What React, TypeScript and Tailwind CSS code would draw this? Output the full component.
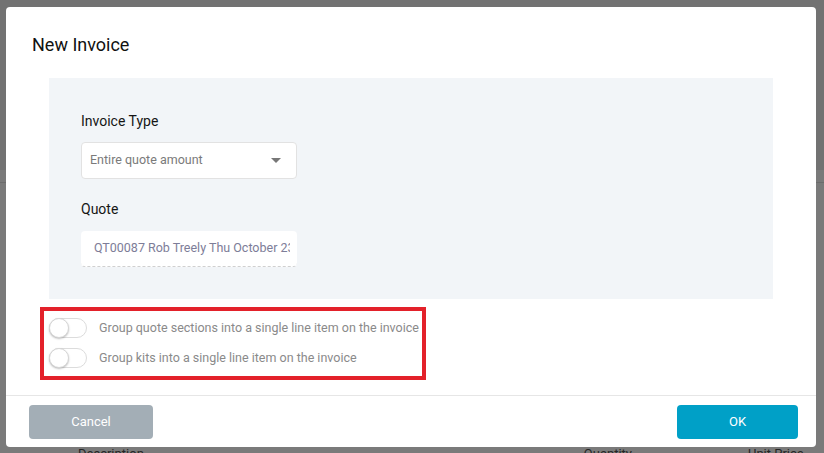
import React from 'react'

const OPTIONS = [
  'Group quote sections into a single line item on the invoice',
  'Group kits into a single line item on the invoice',
]

function Toggle() {
  return (
    <div className="relative h-[20px] w-[38px] shrink-0 rounded-full border border-[#dcdcdc] bg-white">
      <div className="absolute left-[-1px] top-[-1px] h-[20px] w-[20px] rounded-full border border-[#d6d6d6] bg-white shadow-[0_1px_2px_rgba(0,0,0,0.25)]" />
    </div>
  )
}

export default function App() {
  return (
    <div className="relative h-[453px] w-[824px] overflow-hidden bg-[#7a7a7a] font-['Roboto',sans-serif]">
      {/* page behind the overlay */}
      <div className="flex h-full flex-col">
        <div className="h-[170px] bg-[#727272]" />
        <div className="h-[12px]" />
        <div className="h-px bg-[#6c6c6c]" />
        <div className="flex-1" />
        <div className="flex h-[6px] items-start text-[13px] leading-[13px] text-[#262626]">
          <span className="ml-[78px]">Description</span>
          <span className="ml-[440px]">Quantity</span>
          <span className="ml-[116px]">Unit Price</span>
        </div>
      </div>

      {/* dialog */}
      <div className="absolute left-[6px] top-[7px] flex h-[440px] w-[810px] flex-col rounded-[4px] bg-white">
        <div className="h-[71px] pl-[26px] pt-[26px]">
          <h1 className="text-[18px] leading-[24px] text-[#111]">New Invoice</h1>
        </div>

        <div className="mx-[43px] flex h-[221px] flex-col bg-[#f2f5f8] px-[32px] pt-[33px]">
          <label className="text-[14px] leading-[20px] text-[#151515]">Invoice Type</label>
          <div className="mt-[11px] flex h-[37px] w-[216px] items-center justify-between rounded-[4px] border border-[#e2e2e2] bg-white pl-[8px] pr-[15px]">
            <span className="text-[12.5px] text-[#7a7a7a]">Entire quote amount</span>
            <svg width="10" height="5" viewBox="0 0 10 5">
              <path d="M0 0 L10 0 L5 5 Z" fill="#777" />
            </svg>
          </div>

          <label className="mt-[20px] text-[14px] leading-[20px] text-[#151515]">Quote</label>
          <div className="mt-[12px] flex h-[36px] w-[216px] items-center rounded-[4px] border-b border-dashed border-[#d0d0d0] bg-white pl-[13px] pr-[7px]">
            <span className="overflow-hidden whitespace-nowrap text-[12.5px] text-[#7d7d98]">
              QT00087 Rob Treely Thu October 23
            </span>
          </div>
        </div>

        <div className="ml-[34px] mt-[8px] flex h-[73px] w-[386px] flex-col gap-[10px] border-[4px] border-[#e3212a] pl-[5px] pt-[7px]">
          {OPTIONS.map(text => (
            <div key={text} className="flex h-[20px] items-center gap-[12px]">
              <Toggle />
              <span className="whitespace-nowrap text-[12.5px] text-[#8a8a8a]">{text}</span>
            </div>
          ))}
        </div>

        <div className="mt-[15px] h-px bg-[#e6e6e6]" />

        <div className="flex items-center justify-between pl-[23px] pr-[18px] pt-[9px]">
          <button className="h-[34px] w-[124px] rounded-[4px] bg-[#a3aeb6] text-[13px] text-white">
            Cancel
          </button>
          <button className="h-[34px] w-[121px] rounded-[4px] bg-[#00a0c7] text-[13px] text-white">
            OK
          </button>
        </div>
      </div>
    </div>
  )
}
